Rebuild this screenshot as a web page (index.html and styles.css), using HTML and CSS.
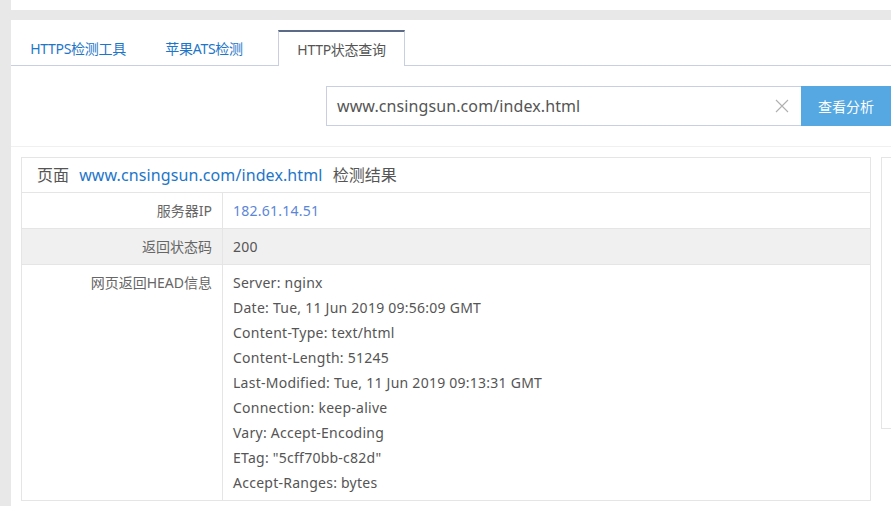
FILE: index.html
```html
<!DOCTYPE html>
<html lang="zh-CN">
<head>
<meta charset="utf-8">
<title>HTTP状态查询</title>
<link rel="stylesheet" href="styles.css">
</head>
<body>
<div class="top-strip"></div>
<div class="panel">
  <div class="tabs">
    <a class="tab tab-https">HTTPS检测工具</a>
    <a class="tab tab-ats">苹果ATS检测</a>
    <a class="tab active">HTTP状态查询</a>
  </div>
  <div class="search-row">
    <div class="search-box">
      <span class="search-text">www.cnsingsun.com/index.html</span>
      <svg class="clear" width="14" height="14" viewBox="0 0 14 14"><path d="M1 1L13 13M13 1L1 13" stroke="#b0b0b0" stroke-width="1.1" fill="none"/></svg>
    </div>
    <button class="search-btn">查看分析</button>
  </div>
  <div class="content">
    <div class="result">
      <div class="result-head">页面 <span class="url">www.cnsingsun.com/index.html</span> 检测结果</div>
      <div class="row">
        <div class="label">服务器IP</div>
        <div class="value ip">182.61.14.51</div>
      </div>
      <div class="row alt">
        <div class="label">返回状态码</div>
        <div class="value">200</div>
      </div>
      <div class="row">
        <div class="label">网页返回HEAD信息</div>
        <div class="value">
          <div>Server: nginx</div>
          <div>Date: Tue, 11 Jun 2019 09:56:09 GMT</div>
          <div>Content-Type: text/html</div>
          <div>Content-Length: 51245</div>
          <div>Last-Modified: Tue, 11 Jun 2019 09:13:31 GMT</div>
          <div>Connection: keep-alive</div>
          <div>Vary: Accept-Encoding</div>
          <div>ETag: "5cff70bb-c82d"</div>
          <div>Accept-Ranges: bytes</div>
        </div>
      </div>
    </div>
    <div class="side"></div>
  </div>
</div>
</body>
</html>
```
FILE: styles.css
```css
html, body {
  margin: 0;
  padding: 0;
  height: 100%;
  overflow: hidden;
}
body {
  background: #e8e8e8;
  font-family: "Noto Sans", "Noto Sans CJK SC", sans-serif;
  font-size: 14px;
  color: #555;
}
.top-strip {
  margin-left: 11px;
  height: 10px;
  background: #fff;
}
.panel {
  margin-left: 11px;
  margin-top: 10px;
  background: #fff;
  height: 486px;
  overflow: hidden;
}
.tabs {
  display: flex;
  padding-top: 10px;
  border-bottom: 1px solid #c8cfe0;
  height: 35px;
}
.tab {
  display: flex;
  align-items: center;
  justify-content: center;
  color: #1e76c9;
  height: 35px;
  box-sizing: border-box;
  letter-spacing: -0.3px;
  white-space: nowrap;
}
.tab-https {
  width: 134px;
}
.tab-ats {
  width: 118px;
}
.tab.active {
  width: 127px;
  margin-left: 15px;
  color: #555;
  background: #fff;
  border: 1px solid #c8cfe0;
  border-top: 2px solid #5b6b87;
  border-bottom: none;
  height: 36px;
  padding-bottom: 1px;
}
.search-row {
  display: flex;
  justify-content: flex-end;
  padding: 20px 0;
  border-bottom: 1px solid #f0f0f0;
}
.search-box {
  width: 475px;
  height: 40px;
  box-sizing: border-box;
  border: 1px solid #c8cfe0;
  border-right: none;
  display: flex;
  align-items: center;
  padding: 0 12px 0 10px;
}
.search-text {
  flex: 1;
  font-size: 16px;
  color: #555;
  letter-spacing: 0.1px;
}
.clear {
  display: block;
}
.search-btn {
  width: 90px;
  height: 40px;
  border: none;
  background: #55a8e2;
  color: #fff;
  font-family: inherit;
  font-size: 14px;
  padding: 0;
}
.content {
  display: flex;
  align-items: flex-start;
  gap: 10px;
  padding: 10px 0 0 10px;
}
.result {
  flex: none;
  width: 850px;
  box-sizing: border-box;
  border: 1px solid #e5e5e5;
}
.result-head {
  font-size: 16px;
  line-height: 24px;
  padding: 5px 15px;
  border-bottom: 1px solid #e5e5e5;
}
.url {
  color: #1e76c9;
  margin: 0 6px;
  letter-spacing: 0.1px;
}
.row {
  display: flex;
  border-bottom: 1px solid #e5e5e5;
}
.row:last-child {
  border-bottom: none;
}
.row.alt {
  background: #f0f0f0;
}
.label {
  flex: none;
  width: 201px;
  box-sizing: border-box;
  text-align: right;
  padding: 5px 10px;
  line-height: 25px;
  color: #666;
  border-right: 1px solid #e5e5e5;
}
.value {
  flex: 1;
  padding: 5px 10px;
  line-height: 25px;
  color: #555;
  letter-spacing: 0.25px;
}
.value.ip {
  color: #5b86d8;
}
.side {
  flex: none;
  width: 200px;
  height: 270px;
  border: 1px solid #e5e5e5;
}
```
